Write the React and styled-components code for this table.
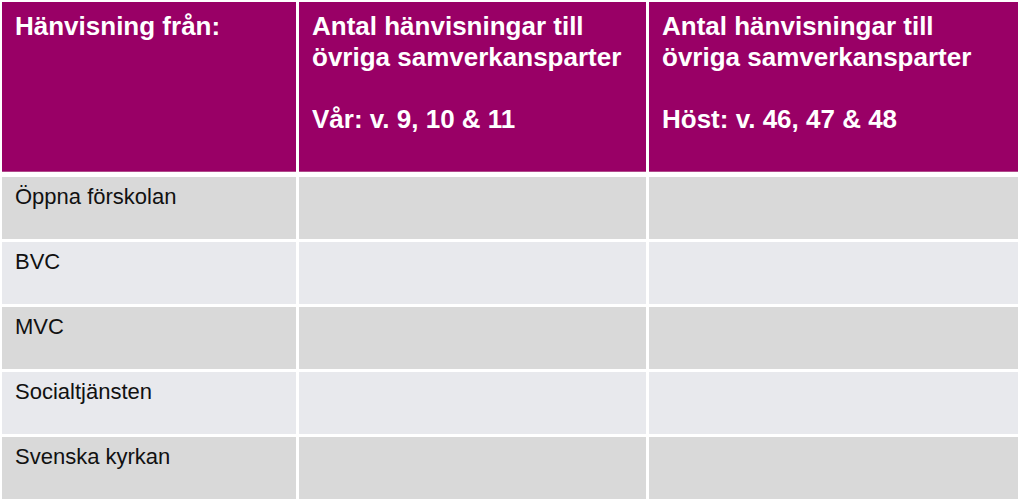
import { Fragment } from "react";
import styled, { createGlobalStyle } from "styled-components";

const GlobalStyle = createGlobalStyle`
  html, body {
    margin: 0;
    background: #ffffff;
  }
  body {
    font-family: "Liberation Sans", Arial, sans-serif;
  }
`;

const StyledPage = styled.div`
  padding: 2px 6px 0 2px;
`;

const StyledTable = styled.div`
  display: grid;
  grid-template-columns: 294px 347px 369px;
  column-gap: 3px;
  row-gap: 3px;
`;

const StyledHeaderCell = styled.div`
  background-color: #990066;
  color: #ffffff;
  font-weight: bold;
  font-size: 26px;
  line-height: 31px;
  height: 170px;
  box-sizing: border-box;
  padding: 9px 13px;
  margin-bottom: 2px;
  border-bottom: 1px solid #b04a8a;
`;

const StyledLine = styled.div`
  white-space: nowrap;
  min-height: 31px;
`;

const StyledCell = styled.div`
  background-color: ${(props) => (props.$light ? "#e8e9ed" : "#d9d9d9")};
  color: #111111;
  font-size: 22px;
  line-height: 26px;
  height: 62px;
  box-sizing: border-box;
  padding: 7px 13px;
`;

const rows = ["Öppna förskolan", "BVC", "MVC", "Socialtjänsten", "Svenska kyrkan"];

const headers = [
  ["Hänvisning från:"],
  ["Antal hänvisningar till", "övriga samverkansparter", "", "Vår: v. 9, 10 & 11"],
  ["Antal hänvisningar till", "övriga samverkansparter", "", "Höst: v. 46, 47 & 48"],
];

const App = () => {
  return (
    <StyledPage>
      <GlobalStyle />
      <StyledTable>
        {headers.map((lines, i) => (
          <StyledHeaderCell key={i}>
            {lines.map((line, j) => (
              <StyledLine key={j}>{line}</StyledLine>
            ))}
          </StyledHeaderCell>
        ))}
        {rows.map((label, i) => (
          <Fragment key={label}>
            <StyledCell $light={i % 2 === 1}>{label}</StyledCell>
            <StyledCell $light={i % 2 === 1} />
            <StyledCell $light={i % 2 === 1} />
          </Fragment>
        ))}
      </StyledTable>
    </StyledPage>
  );
};

export default App;
